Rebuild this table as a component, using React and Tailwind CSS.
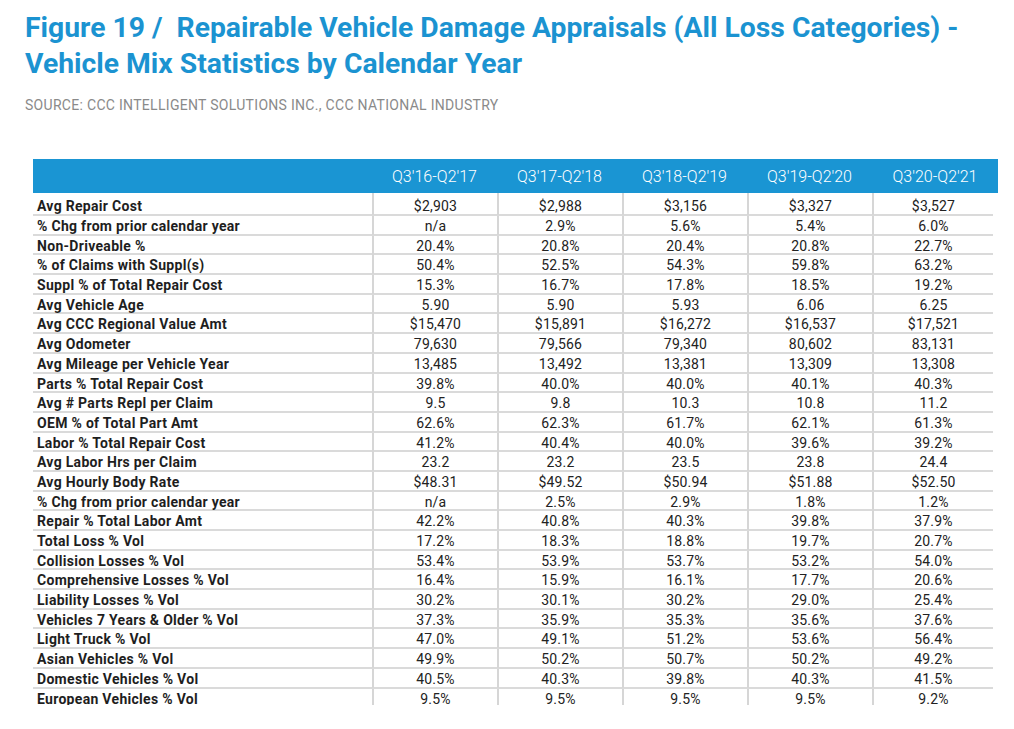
import React from 'react';

const years = ["Q3'16-Q2'17", "Q3'17-Q2'18", "Q3'18-Q2'19", "Q3'19-Q2'20", "Q3'20-Q2'21"];

const rows = [
  ['Avg Repair Cost', '$2,903', '$2,988', '$3,156', '$3,327', '$3,527'],
  ['% Chg from prior calendar year', 'n/a', '2.9%', '5.6%', '5.4%', '6.0%'],
  ['Non-Driveable %', '20.4%', '20.8%', '20.4%', '20.8%', '22.7%'],
  ['% of Claims with Suppl(s)', '50.4%', '52.5%', '54.3%', '59.8%', '63.2%'],
  ['Suppl % of Total Repair Cost', '15.3%', '16.7%', '17.8%', '18.5%', '19.2%'],
  ['Avg Vehicle Age', '5.90', '5.90', '5.93', '6.06', '6.25'],
  ['Avg CCC Regional Value Amt', '$15,470', '$15,891', '$16,272', '$16,537', '$17,521'],
  ['Avg Odometer', '79,630', '79,566', '79,340', '80,602', '83,131'],
  ['Avg Mileage per Vehicle Year', '13,485', '13,492', '13,381', '13,309', '13,308'],
  ['Parts % Total Repair Cost', '39.8%', '40.0%', '40.0%', '40.1%', '40.3%'],
  ['Avg # Parts Repl per Claim', '9.5', '9.8', '10.3', '10.8', '11.2'],
  ['OEM % of Total Part Amt', '62.6%', '62.3%', '61.7%', '62.1%', '61.3%'],
  ['Labor % Total Repair Cost', '41.2%', '40.4%', '40.0%', '39.6%', '39.2%'],
  ['Avg Labor Hrs per Claim', '23.2', '23.2', '23.5', '23.8', '24.4'],
  ['Avg Hourly Body Rate', '$48.31', '$49.52', '$50.94', '$51.88', '$52.50'],
  ['% Chg from prior calendar year', 'n/a', '2.5%', '2.9%', '1.8%', '1.2%'],
  ['Repair % Total Labor Amt', '42.2%', '40.8%', '40.3%', '39.8%', '37.9%'],
  ['Total Loss % Vol', '17.2%', '18.3%', '18.8%', '19.7%', '20.7%'],
  ['Collision Losses % Vol', '53.4%', '53.9%', '53.7%', '53.2%', '54.0%'],
  ['Comprehensive Losses % Vol', '16.4%', '15.9%', '16.1%', '17.7%', '20.6%'],
  ['Liability Losses % Vol', '30.2%', '30.1%', '30.2%', '29.0%', '25.4%'],
  ['Vehicles 7 Years & Older % Vol', '37.3%', '35.9%', '35.3%', '35.6%', '37.6%'],
  ['Light Truck % Vol', '47.0%', '49.1%', '51.2%', '53.6%', '56.4%'],
  ['Asian Vehicles % Vol', '49.9%', '50.2%', '50.7%', '50.2%', '49.2%'],
  ['Domestic Vehicles % Vol', '40.5%', '40.3%', '39.8%', '40.3%', '41.5%'],
  ['European Vehicles % Vol', '9.5%', '9.5%', '9.5%', '9.5%', '9.2%'],
];

const App = () => {
  return (
    <div className="w-[1014px] h-[729px] bg-white overflow-hidden font-['Roboto',sans-serif]">
      <div className="pl-[25px] pt-[10px]">
        <h1 className="text-[#1b93d1] text-[28.3px] leading-[36px] font-bold">
          Figure 19 /&nbsp; Repairable Vehicle Damage Appraisals (All Loss Categories) -
          <br />
          Vehicle Mix Statistics by Calendar Year
        </h1>
        <p className="mt-[14px] text-[14px] leading-[18px] text-[#8a8a8a] tracking-[0.3px]">
          SOURCE: CCC INTELLIGENT SOLUTIONS INC., CCC NATIONAL INDUSTRY
        </p>
      </div>

      <div className="ml-[33px] mt-[45px] w-[965px] h-[546px] overflow-hidden">
        {/* Header */}
        <div className="grid grid-cols-[339px_125px_125px_125px_125px_126px] h-[34px] bg-[#1a95d3] items-center text-white text-[16px] font-light">
          <div />
          {years.map((y) => (
            <div key={y} className="text-center pt-[2px]">{y}</div>
          ))}
        </div>

        {/* Rows */}
        <div className="w-[960px]">
          {rows.map((r, i) => (
            <div
              key={i}
              className={`grid grid-cols-[339px_125px_125px_125px_125px_121px] border-b-2 border-[#dadada] text-[14px] text-[#222] ${
                i === 0 ? 'h-[23px]' : 'h-[19.7px]'
              }`}
            >
              <div className={`pl-[4px] font-bold leading-[17px] tracking-[0.3px] text-[#1e1e1e] ${i === 0 ? 'pt-[5px]' : 'pt-[2px]'}`}>
                {r[0]}
              </div>
              {r.slice(1).map((v, j) => (
                <div
                  key={j}
                  className={`border-l-2 border-[#d6d6d6] text-center leading-[17px] tracking-[0.2px] ${i === 0 ? 'pt-[5px]' : 'pt-[2px]'}`}
                >
                  {v}
                </div>
              ))}
            </div>
          ))}
        </div>
      </div>
    </div>
  );
};

export default App;
